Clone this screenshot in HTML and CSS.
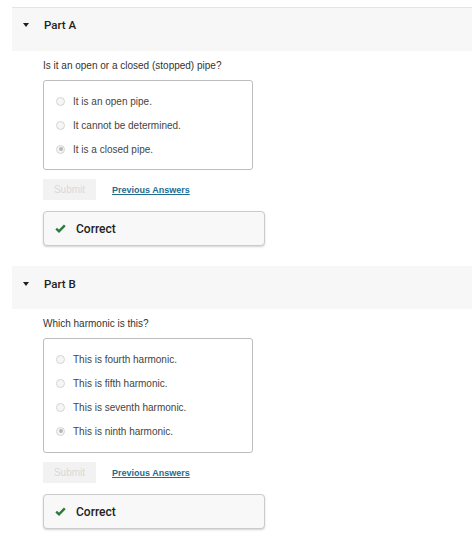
FILE: index.html
```html
<!DOCTYPE html>
<html>
<head>
<meta charset="utf-8">
<link rel="stylesheet" href="styles.css">
</head>
<body>
<div class="page">
  <section class="part first">
    <div class="part-header"><span class="caret"></span><span class="part-title">Part A</span></div>
    <div class="part-body">
      <p class="question">Is it an open or a closed (stopped) pipe?</p>
      <div class="options">
        <div class="option"><span class="radio"></span><span>It is an open pipe.</span></div>
        <div class="option"><span class="radio"></span><span>It cannot be determined.</span></div>
        <div class="option"><span class="radio checked"></span><span>It is a closed pipe.</span></div>
      </div>
      <div class="actions">
        <span class="submit">Submit</span>
        <a class="prev" href="#">Previous Answers</a>
      </div>
      <div class="feedback">
        <svg class="check" width="11" height="9" viewBox="0 0 11 9"><path d="M1.2 4.6 L4 7.3 L9.8 1.3" fill="none" stroke="#2b7a3a" stroke-width="2.4"/></svg>
        <span>Correct</span>
      </div>
    </div>
  </section>
  <section class="part">
    <div class="part-header"><span class="caret"></span><span class="part-title">Part B</span></div>
    <div class="part-body">
      <p class="question">Which harmonic is this?</p>
      <div class="options four">
        <div class="option"><span class="radio"></span><span>This is fourth harmonic.</span></div>
        <div class="option"><span class="radio"></span><span>This is fifth harmonic.</span></div>
        <div class="option"><span class="radio"></span><span>This is seventh harmonic.</span></div>
        <div class="option"><span class="radio checked"></span><span>This is ninth harmonic.</span></div>
      </div>
      <div class="actions">
        <span class="submit">Submit</span>
        <a class="prev" href="#">Previous Answers</a>
      </div>
      <div class="feedback">
        <svg class="check" width="11" height="9" viewBox="0 0 11 9"><path d="M1.2 4.6 L4 7.3 L9.8 1.3" fill="none" stroke="#2b7a3a" stroke-width="2.4"/></svg>
        <span>Correct</span>
      </div>
    </div>
  </section>
</div>
</body>
</html>
```
FILE: styles.css
```css
html, body {
  margin: 0;
  padding: 0;
  background: #fff;
}
body {
  font-family: "Liberation Sans", Arial, sans-serif;
  color: #333;
}
.page {
  padding: 7px 2px 0 12px;
}
.part {
  margin-bottom: 20px;
}
.part-header {
  background: #f7f7f7;
  height: 43px;
  box-sizing: border-box;
  padding: 11px 0 0 11px;
  display: flex;
  align-items: flex-start;
  line-height: 14px;
}
.part.first .part-header {
  border-top: 1px solid #e4e4e4;
  height: 44px;
  padding-top: 10px;
}
.caret {
  width: 0;
  height: 0;
  border-left: 3.5px solid transparent;
  border-right: 3.5px solid transparent;
  border-top: 4px solid #1f1f1f;
  margin-top: 5px;
  margin-right: 15px;
}
.part-title {
  font-family: Roboto, "Liberation Sans", sans-serif;
  font-weight: 500;
  font-size: 11.5px;
  color: #222;
}
.part-body {
  padding-left: 31px;
}
.question {
  margin: 8px 0 0;
  font-size: 10px;
  line-height: 14px;
  color: #333;
}
.options {
  margin-top: 7px;
  width: 210px;
  box-sizing: border-box;
  border: 1px solid #bdbdbd;
  border-radius: 3px;
  padding: 8px 0;
}
.options.four {
  padding-bottom: 9px;
}
.option {
  display: flex;
  align-items: center;
  height: 24px;
  font-size: 10px;
  color: #444;
  padding-left: 12px;
}
.radio {
  width: 9px;
  height: 9px;
  box-sizing: border-box;
  border: 1px solid #d4d4d4;
  background: #f6f6f6;
  border-radius: 50%;
  margin-right: 8px;
  display: flex;
  align-items: center;
  justify-content: center;
}
.radio.checked::after {
  content: "";
  width: 4px;
  height: 4px;
  border-radius: 50%;
  background: #b8b8b8;
}
.actions {
  margin-top: 9px;
  display: flex;
  align-items: center;
  gap: 16px;
  height: 21px;
}
.submit {
  width: 53px;
  height: 21px;
  background: #f2f2f2;
  color: #d9d9d9;
  font-size: 10px;
  display: flex;
  align-items: center;
  justify-content: center;
}
.prev {
  font-size: 9px;
  font-weight: bold;
  color: #1f6c8f;
  text-decoration: underline;
}
.feedback {
  margin-top: 11px;
  width: 222px;
  height: 35px;
  box-sizing: border-box;
  border: 1px solid #cbcbcb;
  border-radius: 4px;
  background: #f8f8f8;
  box-shadow: 0 1px 2px rgba(0,0,0,0.18);
  display: flex;
  align-items: center;
  padding-left: 11px;
  font-family: Roboto, "Liberation Sans", sans-serif;
  font-weight: 500;
  font-size: 12px;
  color: #222;
}
.check {
  margin-right: 10px;
}
```
